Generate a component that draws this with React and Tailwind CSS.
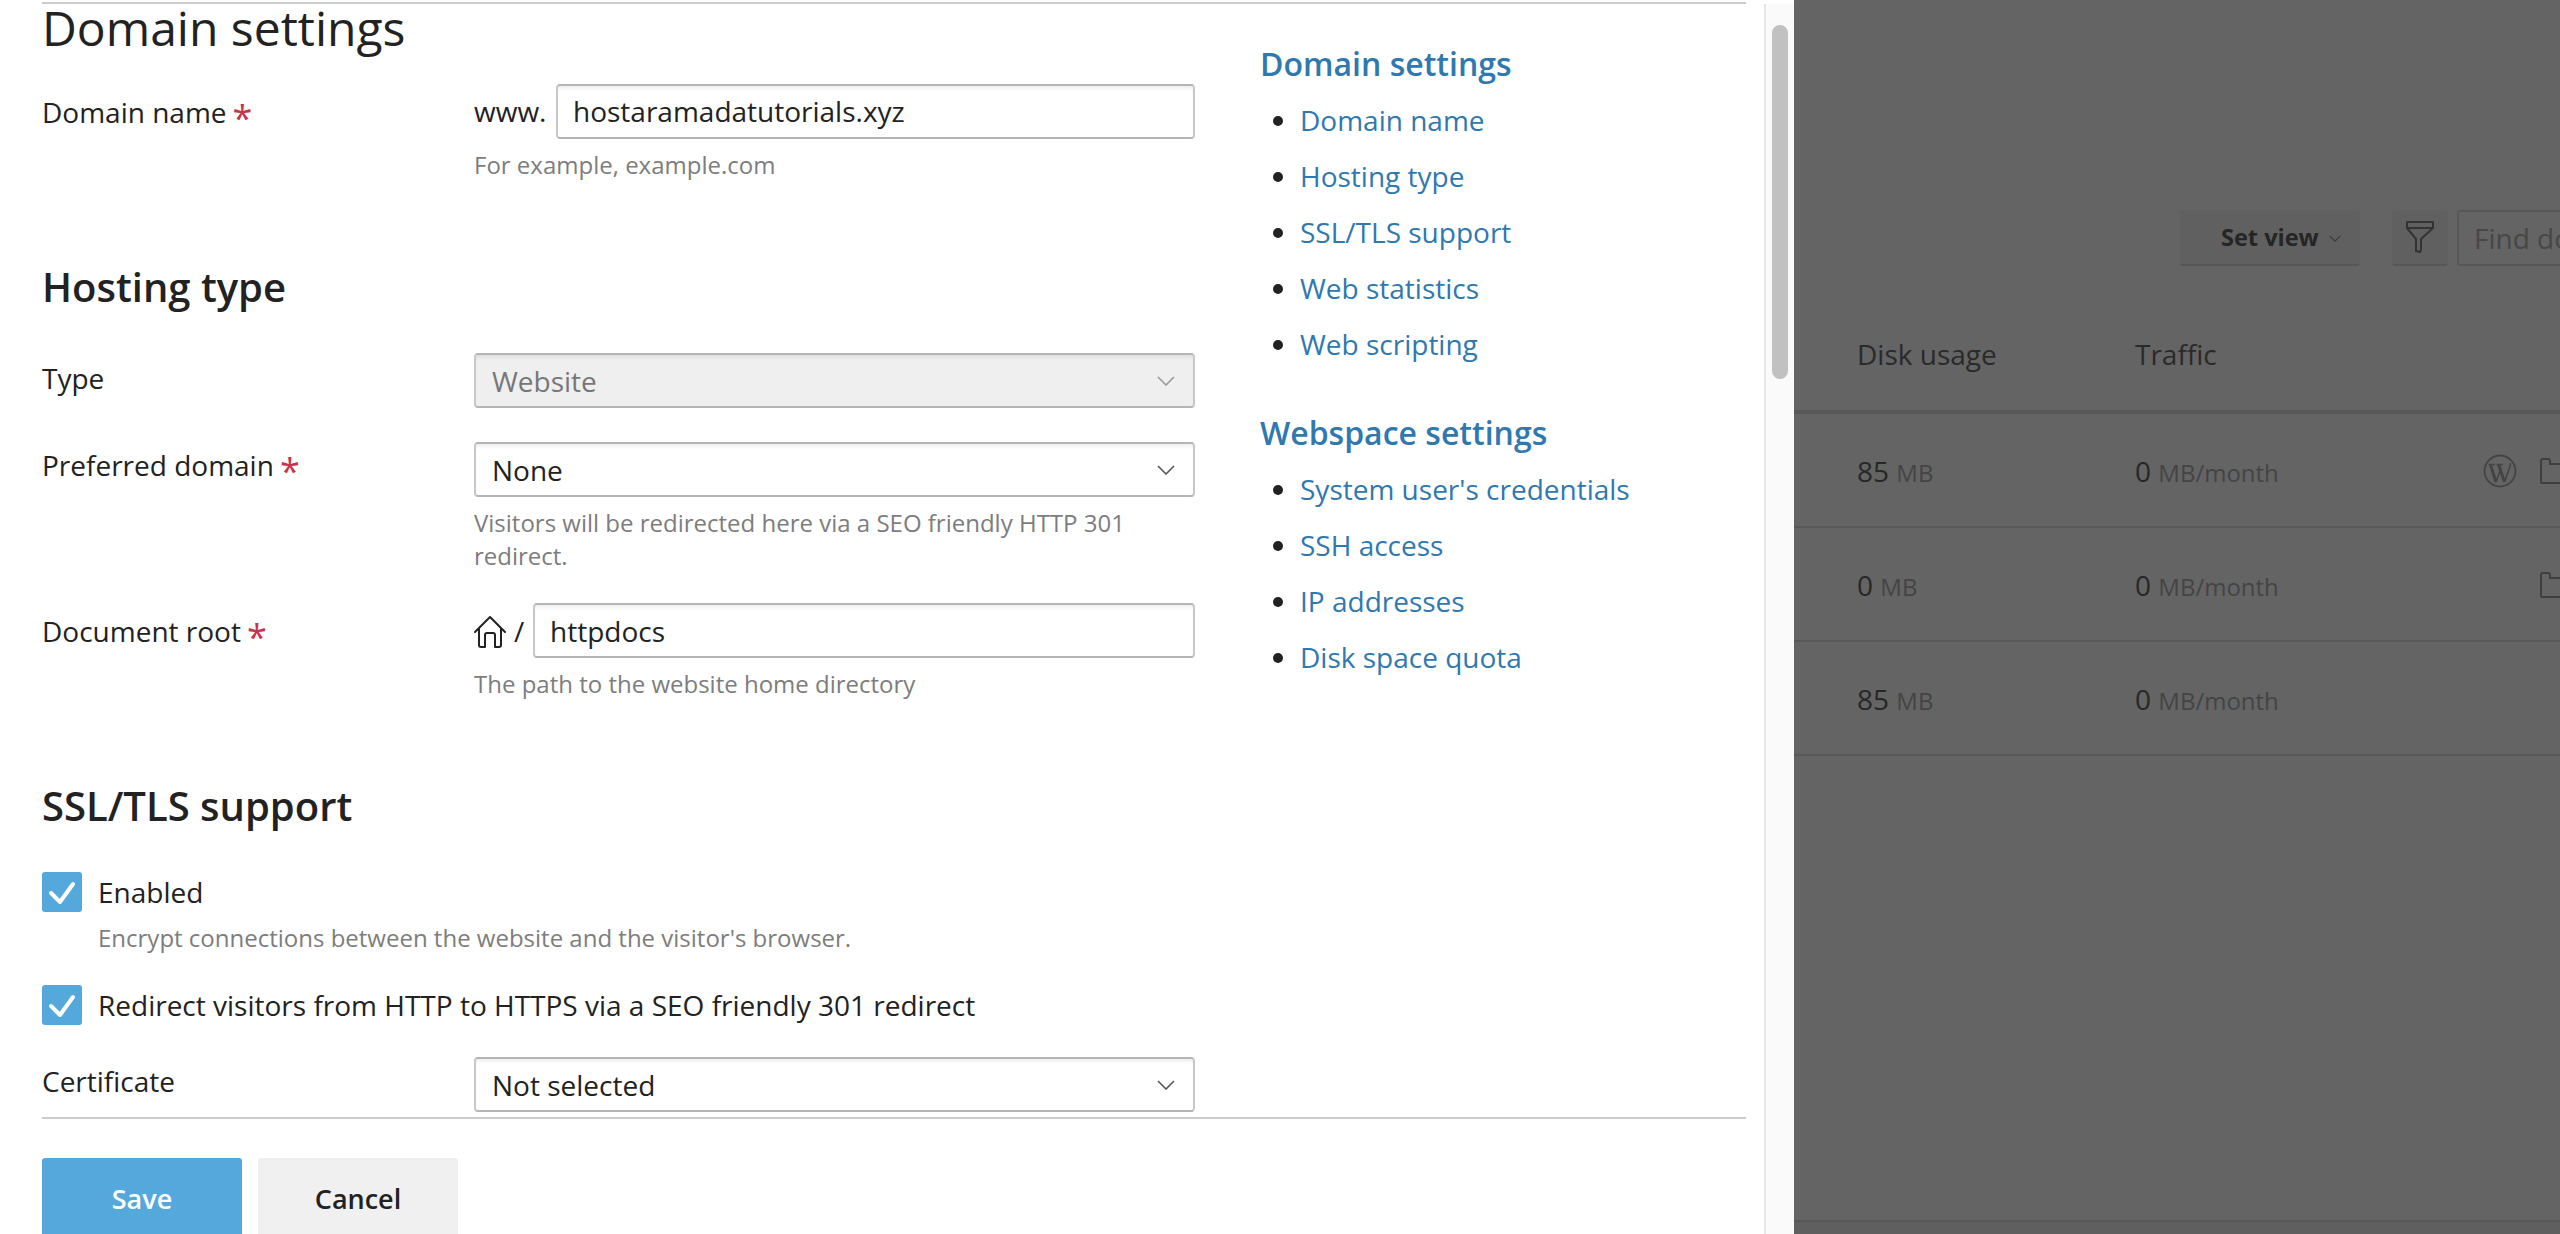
const Chevron = ({ className }) => (
  <svg viewBox="0 0 18 10" fill="none" stroke="currentColor" strokeWidth="1.6" className={className}>
    <path d="M1 1l8 8 8-8" />
  </svg>
);

const Check = () => (
  <svg viewBox="0 0 40 40" fill="none" stroke="#fff" strokeWidth="4" strokeLinecap="round" strokeLinejoin="round" className="w-10 h-10">
    <path d="M9 21l9 9 13-18" />
  </svg>
);

const Folder = () => (
  <svg viewBox="0 0 40 26" fill="none" stroke="currentColor" strokeWidth="2" className="w-10 h-[26px] shrink-0 text-[#3f3f3f]">
    <path d="M1 24V3a2 2 0 0 1 2-2h5a2 2 0 0 1 2 2v3h29M1 24a1 1 0 0 0 1 1h37" />
  </svg>
);

const WpLogo = () => (
  <svg viewBox="0 0 34 34" fill="none" stroke="#444" className="w-[34px] h-[34px] mr-[23px] shrink-0">
    <circle cx="17" cy="17" r="15.5" strokeWidth="1.8" />
    <path d="M7.5 11l5.5 17M15.5 10.5l6 17.5" strokeWidth="3" />
    <path d="M13 28l5-14M21.5 28l5.5-15.5c.8-2 .5-2.8.2-3.5" strokeWidth="1.6" />
    <path d="M5.5 10.5h6.5M13.5 10.5h6.5" strokeWidth="1.3" />
  </svg>
);

const Label = ({ text, required, className }) => (
  <div className={`w-[432px] shrink-0 text-[28px] leading-[40px] ${className}`}>
    {text}
    {required && <span className="ml-[6px] text-[36px] leading-none align-[-8px] text-[#c8324b]">*</span>}
  </div>
);

const Hint = ({ children, className }) => (
  <p className={`text-[24px] leading-[33px] text-[#7d7d7d] ${className}`}>{children}</p>
);

const fieldClass =
  'h-[55px] border-2 border-x-[#c8c8c8] border-y-[#b5b5b5] rounded-[4px] shadow-[inset_0_4px_4px_-2px_rgba(0,0,0,0.08)] text-[28px] text-[#222] flex items-center';

const Select = ({ value, disabled }) => (
  <div className={`${fieldClass} w-[721px] justify-between pl-[16px] pr-[18px] pt-[1px] ${disabled ? 'bg-[#efefef] text-[#777]' : 'bg-white'}`}>
    <span>{value}</span>
    <Chevron className={`w-[18px] h-[10px] ${disabled ? 'text-[#999]' : 'text-[#555]'}`} />
  </div>
);

const Box = () => (
  <div className="w-10 h-10 shrink-0 rounded-[3px] bg-[#55a8dc]">
    <Check />
  </div>
);

const Nav = ({ title, items, className }) => (
  <div className={className}>
    <h3 className="text-[32px] leading-[40px] font-semibold text-[#2f78b0]">{title}</h3>
    <ul className="mt-[8px] list-disc pl-10 marker:text-[#222] text-[#2f78b0] text-[28px] leading-[56px]">
      {items.map((item) => (
        <li key={item}>{item}</li>
      ))}
    </ul>
  </div>
);

const Row = ({ disk, folder, wp }) => (
  <div className="h-[114px] border-b-2 border-[#585858] flex items-center pl-[63px] pt-[1px]">
    <div className="w-[278px] shrink-0 text-[28px] text-[#272727]">
      {disk} <span className="text-[24px] text-[#444]">MB</span>
    </div>
    <div className="w-[348px] shrink-0 text-[28px] text-[#272727]">
      0 <span className="text-[24px] text-[#444]">MB/month</span>
    </div>
    <div className="flex items-center mt-[1px]">
      {wp ? <WpLogo /> : <div className="w-[57px]" />}
      {folder && <Folder />}
    </div>
  </div>
);

export default function App() {
  return (
    <div className="flex h-[1234px] w-[2560px] overflow-hidden bg-[#646464] font-['Open_Sans',sans-serif] text-[#222]">
      {/* side panel */}
      <div className="flex w-[1794px] shrink-0 bg-white">
        <div className="w-[1764px] shrink-0 pl-[42px] pt-[2px]">
          <div className="w-[1704px]">
            <div className="h-[2px] bg-[#cccccc]" />
            <div className="flex h-[1113px]">
              <div className="w-[1153px] shrink-0">
                <h1 className="text-[48px] leading-[48px] text-[#222]">Domain settings</h1>

                <div className="flex mt-[32px]">
                  <Label text="Domain name" required className="mt-[8px]" />
                  <div className="w-[721px]">
                    <div className="flex items-center">
                      <span className="w-[82px] shrink-0 pb-[2px] text-[28px]">www.</span>
                      <div className={`${fieldClass} w-[639px] pl-[15px] pb-[2px] bg-white`}>hostaramadatutorials.xyz</div>
                    </div>
                    <Hint className="mt-[9px]">For example, example.com</Hint>
                  </div>
                </div>

                <h2 className="mt-[79px] text-[40px] leading-[54px] font-semibold">Hosting type</h2>

                <div className="flex mt-[39px]">
                  <Label text="Type" className="mt-[5px]" />
                  <Select value="Website" disabled />
                </div>

                <div className="flex mt-[34px]">
                  <Label text="Preferred domain" required className="mt-[3px]" />
                  <div className="w-[721px]">
                    <Select value="None" />
                    <Hint className="mt-[9px]">Visitors will be redirected here via a SEO friendly HTTP 301 redirect.</Hint>
                  </div>
                </div>

                <div className="flex mt-[31px]">
                  <Label text="Document root" required className="mt-[8px]" />
                  <div className="w-[721px]">
                    <div className="flex items-center">
                      <svg viewBox="0 0 32 32" fill="none" stroke="#222" strokeWidth="2" strokeLinejoin="round" strokeLinecap="round" className="w-8 h-8 shrink-0 mt-[3px]">
                        <path d="M1 16L16 1l15 15M5 13v16a2 2 0 0 0 2 2h4V19a2 2 0 0 1 2-2h6a2 2 0 0 1 2 2v12h4a2 2 0 0 0 2-2V13" />
                      </svg>
                      <span className="w-[27px] shrink-0 pl-[8px] text-[28px]">/</span>
                      <div className={`${fieldClass} w-[662px] pl-[15px] bg-white`}>httpdocs</div>
                    </div>
                    <Hint className="mt-[9px]">The path to the website home directory</Hint>
                  </div>
                </div>

                <h2 className="mt-[79px] text-[40px] leading-[54px] font-semibold">SSL/TLS support</h2>

                <div className="flex items-center mt-[39px]">
                  <Box />
                  <span className="ml-4 text-[28px] leading-[40px]">Enabled</span>
                </div>
                <Hint className="mt-[9px] ml-14">Encrypt connections between the website and the visitor's browser.</Hint>
                <div className="flex items-center mt-[31px]">
                  <Box />
                  <span className="ml-4 text-[28px] leading-[40px]">Redirect visitors from HTTP to HTTPS via a SEO friendly 301 redirect</span>
                </div>

                <div className="flex mt-[32px]">
                  <Label text="Certificate" className="mt-[4px]" />
                  <Select value="Not selected" />
                </div>
              </div>

              <div className="ml-[65px] w-[440px] pt-[40px]">
                <Nav title="Domain settings" items={['Domain name', 'Hosting type', 'SSL/TLS support', 'Web statistics', 'Web scripting']} />
                <Nav
                  className="mt-[41px]"
                  title="Webspace settings"
                  items={["System user's credentials", 'SSH access', 'IP addresses', 'Disk space quota']}
                />
              </div>
            </div>
            <div className="h-[2px] bg-[#cccccc]" />
            <div className="flex gap-4 mt-[39px]">
              <div className="w-[200px] h-[82px] shrink-0 rounded-[3px] bg-[#55a8dc] text-white text-[27px] font-semibold flex items-center justify-center">Save</div>
              <div className="w-[200px] h-[82px] shrink-0 rounded-[3px] bg-[#f0f0f0] text-[27px] font-semibold flex items-center justify-center">Cancel</div>
            </div>
          </div>
        </div>
        {/* scrollbar */}
        <div className="w-[30px] mt-[4px] bg-[#fafafa] border-l-2 border-[#e6e6e6] pl-[6px] pt-[21px]">
          <div className="w-4 h-[354px] rounded-lg bg-[#c1c1c1]" />
        </div>
      </div>

      {/* page behind the overlay */}
      <div className="flex-1 min-w-0 overflow-hidden pt-[210px]">
        <div className="flex pl-[386px]">
          <div className="w-[180px] h-[56px] shrink-0 rounded-[3px] bg-[#606060] border-b-2 border-[#575757] flex items-center pl-[41px] pt-[2px] gap-[10px] text-[23.5px] font-bold text-[#252525]">
            Set view
            <Chevron className="w-3 h-[7px] text-[#3a3a3a]" />
          </div>
          <div className="ml-8 w-[56px] h-[56px] shrink-0 rounded-[3px] bg-[#606060] border-b-2 border-[#575757] flex items-center justify-center">
            <svg viewBox="0 0 28 32" fill="none" stroke="#333" strokeWidth="2" strokeLinejoin="round" className="w-7 h-8">
              <path d="M1 1h26v6H1zM1 7l9 11v12l4 1 1-2V18l12-11" />
            </svg>
          </div>
          <div className="ml-[9px] w-[300px] h-[56px] shrink-0 rounded-[3px] border-2 border-[#575757] pl-[15px] flex items-center text-[28px] text-[#474747]">
            Find domain
          </div>
        </div>
        <div className="mt-[34px] h-[114px] border-b-4 border-[#585858] flex items-center pl-[63px] pb-[2px] text-[28px] text-[#2a2a2a]">
          <div className="w-[278px] shrink-0">Disk usage</div>
          <div>Traffic</div>
        </div>
        <Row disk="85" folder wp />
        <Row disk="0" folder />
        <Row disk="85" />
        <div className="h-[466px] border-b-2 border-[#585858]" />
        <div className="h-3 bg-[#5f5f5f]" />
      </div>
    </div>
  );
}
